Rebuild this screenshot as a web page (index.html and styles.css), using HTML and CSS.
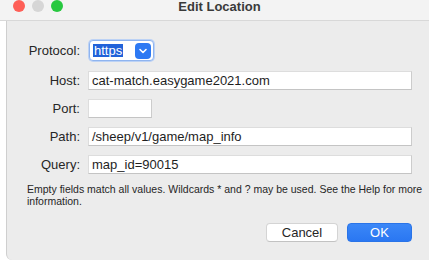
FILE: index.html
```html
<!DOCTYPE html>
<html>
<head>
<meta charset="utf-8">
<link rel="stylesheet" href="styles.css">
</head>
<body>
<div class="titlebar">
  <div class="lights">
    <span class="light red"></span>
    <span class="light gray"></span>
    <span class="light green"></span>
  </div>
  <div class="title">Edit Location</div>
</div>
<div class="window">
  <div class="form">
    <label class="lbl">Protocol:</label>
    <div class="popup">
      <span class="popup-text"><span class="sel">https</span></span>
      <span class="chev"><svg width="16" height="16" viewBox="0 0 16 16"><path d="M5 6.5 L8 9.5 L11 6.5" fill="none" stroke="#fff" stroke-width="1.6" stroke-linecap="round" stroke-linejoin="round"/></svg></span>
    </div>
    <label class="lbl">Host:</label>
    <div class="field">cat-match.easygame2021.com</div>
    <label class="lbl">Port:</label>
    <div class="field short"></div>
    <label class="lbl">Path:</label>
    <div class="field">/sheep/v1/game/map_info</div>
    <label class="lbl">Query:</label>
    <div class="field">map_id=90015</div>
  </div>
  <p class="help">Empty fields match all values. Wildcards * and ? may be used. See the Help for more information.</p>
  <div class="buttons">
    <button class="btn cancel">Cancel</button>
    <button class="btn ok">OK</button>
  </div>
</div>
</body>
</html>
```
FILE: styles.css
```css
html, body {
  margin: 0;
  padding: 0;
  background: #ffffff;
  width: 429px;
  height: 260px;
  overflow: hidden;
  font-family: "Liberation Sans", Arial, sans-serif;
  color: #262626;
}
.titlebar {
  position: relative;
  height: 20px;
  background: #f3f3f3;
  border-bottom: 1px solid #d8d8d8;
}
.lights {
  display: flex;
  gap: 7px;
  padding-left: 13px;
  padding-top: 0;
}
.light {
  width: 12px;
  height: 12px;
  border-radius: 50%;
  display: block;
}
.red { background: #fe5f57; }
.gray { background: #d6d6d6; }
.green { background: #28c840; }
.title {
  position: absolute;
  left: 0;
  right: 0;
  top: 0;
  text-align: center;
  font-weight: bold;
  font-size: 13px;
  line-height: 13px;
  color: #3a3a3a;
  padding-left: 10px;
}
.window {
  margin-left: 6px;
  height: 239px;
  background: #ececec;
  border-left: 1px solid #cfcfcf;
  border-bottom-left-radius: 6px;
  box-sizing: border-box;
  padding: 18px 17px 0 0;
}
.form {
  display: grid;
  grid-template-columns: 73px 1fr;
  column-gap: 8px;
  row-gap: 9px;
  align-items: center;
}
.lbl {
  text-align: right;
  font-size: 13px;
  color: #262626;
}
.popup {
  width: 58px;
  height: 19px;
  display: flex;
  align-items: center;
  justify-content: space-between;
  background: #fff;
  border: 1px solid #8fb4ef;
  box-shadow: 0 0 0 1px #bcd2f5;
  border-radius: 4px;
  padding: 0 2px 0 3px;
  margin: 1px 0 1px 1px;
  box-sizing: content-box;
}
.popup-text {
  font-size: 13px;
  line-height: 13px;
}
.sel {
  background: #2162d9;
  color: #fff;
  padding: 0 1px;
  display: inline-block;
  height: 13px;
  line-height: 13px;
}
.chev {
  width: 16px;
  height: 16px;
  background: #2d79f3;
  border-radius: 4px;
  display: flex;
}
.field {
  height: 19px;
  box-sizing: border-box;
  background: #ffffff;
  border: 1px solid #dddddd;
  border-right-color: #cccccc;
  border-bottom-color: #c4c4c4;
  font-size: 13px;
  line-height: 17px;
  padding-left: 3px;
  color: #1e1e1e;
}
.field.short {
  width: 64px;
}
.help {
  margin: 9px -12px 0 20px;
  font-size: 10.5px;
  line-height: 12px;
  color: #262626;
}
.buttons {
  display: flex;
  justify-content: flex-end;
  gap: 9px;
  margin-top: 16px;
}
.btn {
  height: 19px;
  border-radius: 4px;
  font-family: "Liberation Sans", Arial, sans-serif;
  font-size: 13px;
  padding: 0;
  margin: 0;
  line-height: 17px;
}
.cancel {
  width: 72px;
  background: #ffffff;
  color: #262626;
  border: 1px solid #d4d4d4;
  border-bottom-color: #c2c2c2;
}
.ok {
  width: 65px;
  background: linear-gradient(#3b87f7, #2a77f2);
  color: #ffffff;
  border: 1px solid #2a74e8;
}
```
